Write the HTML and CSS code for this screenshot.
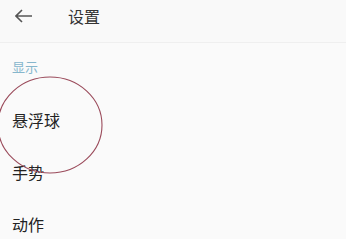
FILE: index.html
```html
<!DOCTYPE html>
<html>
<head lang="zh">
    <meta charset="UTF-8">
    <title>设置</title>
    <link rel="stylesheet" href="styles.css">
</head>
<body>
<div class="page">
    <div class="header">
        <span class="back">
            <svg width="18" height="14" viewBox="0 0 18 14">
                <path d="M1 7 H17 M7 1 L1 7 L7 13" fill="none" stroke="#555" stroke-width="1.6"/>
            </svg>
        </span>
        <span class="title">设置</span>
    </div>
    <div class="section">
        <div class="section-title">显示</div>
        <ul class="list">
            <li>悬浮球</li>
            <li>手势</li>
            <li>动作</li>
        </ul>
        <svg class="mark" width="110" height="104" viewBox="0 0 110 104">
            <ellipse cx="54" cy="51" rx="52" ry="48" fill="none" stroke="#9a4a5a" stroke-width="1.1"/>
        </svg>
    </div>
</div>
</body>
</html>
```

FILE: styles.css
```css
* {
    margin: 0;
    padding: 0;
}

html, body {
    width: 346px;
    height: 239px;
    overflow: hidden;
    background-color: #fafafa;
}

body {
    font-family: "Noto Sans CJK SC", "Noto Sans", sans-serif;
}

ul {
    list-style: none;
}

.header {
    height: 32px;
    padding-bottom: 10px;
    display: flex;
    align-items: center;
    border-bottom: 1px solid #efefef;
    background-color: #f9f9f9;
}

.back {
    width: 18px;
    height: 14px;
    margin-left: 15px;
    display: flex;
}

.title {
    margin-left: 35px;
    font-size: 16px;
    line-height: 16px;
    color: #333;
}

.section {
    position: relative;
}

.section-title {
    padding: 16px 12px 19px;
    font-size: 13px;
    line-height: 16px;
    color: #86b6cc;
}

.list li {
    height: 52px;
    line-height: 52px;
    padding-left: 12px;
    font-size: 16px;
    color: #222;
}

.mark {
    position: absolute;
    left: -4px;
    top: 31px;
}
```
